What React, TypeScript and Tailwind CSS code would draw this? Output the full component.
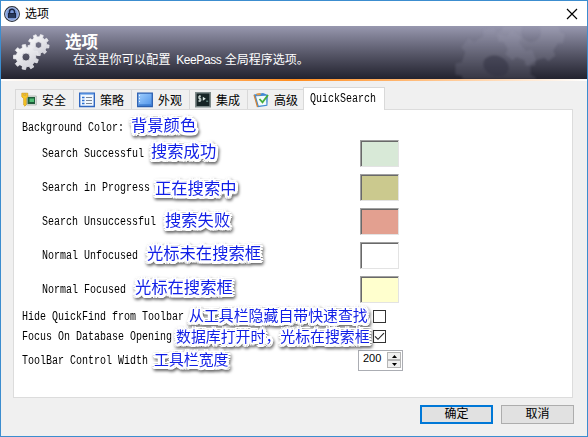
import React from "react";

const cjk = "font-['Liberation_Sans','Noto_Sans_CJK_SC',sans-serif]";

// Outline of a toothed wheel centred on (cx, cy)
function gearPath(cx: number, cy: number, outer: number, inner: number, teeth: number, turn = 0) {
  const step = (Math.PI * 2) / teeth;
  const at = (r: number, a: number) => `${(cx + r * Math.cos(a)).toFixed(2)} ${(cy + r * Math.sin(a)).toFixed(2)}`;
  let d = "";
  for (let i = 0; i < teeth; i++) {
    const a = i * step + turn;
    d += `${i ? "L" : "M"}${at(inner, a - step * 0.28)}L${at(outer, a - step * 0.2)}L${at(outer, a + step * 0.2)}L${at(inner, a + step * 0.28)}`;
  }
  return d + "Z";
}

function hole(cx: number, cy: number, r: number) {
  return `M${cx - r} ${cy}a${r} ${r} 0 1 0 ${r * 2} 0a${r} ${r} 0 1 0 ${-r * 2} 0Z`;
}

function Gears() {
  return (
    <svg width="40" height="38" viewBox="0 0 40 38" className="shrink-0">
      <defs>
        <linearGradient id="metal" x1="0" y1="0" x2="0.6" y2="1">
          <stop offset="0" stopColor="#fff" />
          <stop offset="1" stopColor="#d2d2da" />
        </linearGradient>
      </defs>
      <g fill="url(#metal)" fillRule="evenodd" stroke="#e8e8ee" strokeWidth="0.8" strokeLinejoin="round">
        <path d={gearPath(26.5, 12, 10.6, 8.2, 9, 0.15) + hole(26.5, 12, 3.3)} />
        <path d={gearPath(14, 24, 12.6, 9.8, 9, 0.35) + hole(14, 24, 4)} />
      </g>
    </svg>
  );
}

function FadedGears() {
  return (
    <svg width="116" height="53" viewBox="0 0 116 53" className="shrink-0 blur-[1.2px]">
      <g fill="#b4b4c4" fillRule="evenodd">
        <path opacity="0.16" d={gearPath(78, 6, 34, 29, 9, 0.2) + hole(78, 6, 10)} />
        <path opacity="0.14" d={gearPath(43, 43, 41, 35, 9, 0.35)} />
      </g>
      <ellipse cx="43" cy="40" rx="13" ry="10" fill="#303040" opacity="0.5" transform="rotate(20 43 40)" />
    </svg>
  );
}

function LockIcon() {
  return (
    <svg width="16" height="16" viewBox="0 0 16 16">
      <circle cx="8" cy="8" r="7.4" fill="#7796d6" stroke="#30343c" strokeWidth="1.1" />
      <circle cx="8" cy="8" r="6.3" fill="none" stroke="#b8c8eb" strokeWidth="0.9" />
      <path d="M5.5 8V5.7a2.5 2.5 0 0 1 5 0V8" fill="none" stroke="#182543" strokeWidth="1.5" />
      <path d="M4 7h8v5H4z" fill="#182543" />
      <path d="M5 9h6M5 11h6" stroke="#51668f" strokeWidth="0.6" />
    </svg>
  );
}

function SecurityIcon() {
  return (
    <svg width="16" height="16" viewBox="0 0 16 16">
      <path d="M5.5 4h9.8v9H5.5z" fill="#dfe3df" stroke="#aab0aa" strokeWidth="0.8" />
      <path d="M6.5 5h7.5v7H6.5z" fill="#1f5c3a" />
      <path d="M8.5 6.5h4.5v3.5H8.5z" fill="#4fbd73" />
      <path fillRule="evenodd" d="M.8 1.2h6v3.6L5.2 6.5v6.2l-1.3 1.5-1.2-1.2V6.5L.8 4.8zM2.8 2.2v1.2h2V2.2z" fill="#f8c728" stroke="#c98f05" strokeWidth="0.6" />
    </svg>
  );
}

function PolicyIcon() {
  return (
    <svg width="16" height="16" viewBox="0 0 16 16">
      <path d="M.7 1.2h14.6v13.3H.7z" fill="#f2f8ff" stroke="#2f66c0" strokeWidth="1.4" />
      <path d="M1.3 2h13.4" stroke="#639ee8" strokeWidth="1.3" />
      <path d="M3 5.5h2.5M3 8.5h2.5M3 11.5h2.5" stroke="#2d70d2" strokeWidth="1.5" />
      <path d="M7 5.5h6M7 8.5h6M7 11.5h6" stroke="#7b8697" />
    </svg>
  );
}

function InterfaceIcon() {
  return (
    <svg width="16" height="16" viewBox="0 0 16 16">
      <defs>
        <linearGradient id="screen" x2="1" y2="1">
          <stop offset="0" stopColor="#a4d1ff" />
          <stop offset="1" stopColor="#4a90e8" />
        </linearGradient>
      </defs>
      <path d="M.7 1.2h14.6v13.3H.7z" fill="url(#screen)" stroke="#2b5fb0" strokeWidth="1.3" />
      <path d="M2 13h12" stroke="#2f6fc4" />
      <path d="M2.5 3v9" stroke="#e8f3ff" strokeDasharray="1 2" />
    </svg>
  );
}

function TerminalIcon() {
  return (
    <svg width="16" height="16" viewBox="0 0 16 16">
      <path d="M.8.8h14.4v14H.8z" fill="#172526" stroke="#7f8b8b" strokeWidth="1.6" />
      <path d="M6 4.2H3.8v2.4h2V9H3.2M4.8 3.2V10" fill="none" stroke="#dce8e5" strokeWidth="0.9" />
      <path d="M7.8 4.8l3 2-3 2z" fill="#dce8e5" />
      <path d="M11.2 9.2h2" stroke="#7eaaa2" />
    </svg>
  );
}

function AdvancedIcon() {
  return (
    <svg width="16" height="16" viewBox="0 0 16 16">
      <path d="M.8 2.5L10 1l5 2-.6 10.8-9.7 1.5z" fill="#448bd3" />
      <path d="M1 2.8L4.5 15" stroke="#d78432" strokeWidth="1.2" />
      <path d="M3 4.2l10-.4.4 9-7.7 1z" fill="#f3fbfa" />
      <path d="M3.3 1.5l4-.6.5 2.2-4 .5z" fill="#e49a45" />
      <path d="M6.5 7l3 3.4L15 3" fill="none" stroke="#45ad3c" strokeWidth="1.8" />
    </svg>
  );
}

function Mono({ children }: { children: React.ReactNode }) {
  return (
    <span className="mt-[2px] shrink-0 origin-center scale-y-[1.2] font-['Liberation_Mono',monospace] text-[10px] leading-[14px] whitespace-pre text-black">
      {children}
    </span>
  );
}

// Blue remark with a rounded white halo and a soft shadow under it
function Note({ children, className }: { children: React.ReactNode; className: string }) {
  return (
    <span
      className={`shrink-0 font-['Noto_Sans_CJK_SC',sans-serif] leading-[20px] whitespace-nowrap text-[#101ee6] drop-shadow-[1px_2px_1.5px_rgba(0,0,0,0.6)] [text-shadow:3px_0_white,-3px_0_white,0_3px_white,0_-3px_white,2.6px_1.5px_white,-2.6px_1.5px_white,2.6px_-1.5px_white,-2.6px_-1.5px_white,1.5px_2.6px_white,-1.5px_2.6px_white,1.5px_-2.6px_white,-1.5px_-2.6px_white,1.5px_0_white,-1.5px_0_white,0_1.5px_white,0_-1.5px_white,1px_1px_white,-1px_-1px_white,1px_-1px_white,-1px_1px_white] ${className}`}
    >
      {children}
    </span>
  );
}

const tabs = [
  { label: "安全", icon: <SecurityIcon /> },
  { label: "策略", icon: <PolicyIcon /> },
  { label: "外观", icon: <InterfaceIcon /> },
  { label: "集成", icon: <TerminalIcon /> },
  { label: "高级", icon: <AdvancedIcon /> },
];

const colours = [
  { label: "Search Successful", note: "搜索成功", place: "ml-[7px] -mt-[8px]", fill: "bg-[#d8e9d7]" },
  { label: "Search in Progress", note: "正在搜索中", place: "ml-[5px] -mt-[2px]", fill: "bg-[#cbc98e]" },
  { label: "Search Unsuccessful", note: "搜索失败", place: "ml-[9px] -mt-[5px]", fill: "bg-[#e3a090]" },
  { label: "Normal Unfocused", note: "光标未在搜索框", place: "ml-[9px] -mt-[8px]", fill: "bg-white" },
  { label: "Normal Focused", note: "光标在搜索框", place: "ml-[9px] -mt-[8px]", fill: "bg-[#ffffce]" },
];

function Checkbox({ checked = false }: { checked?: boolean }) {
  return (
    <span className="ml-[13px] flex h-[13px] w-[13px] shrink-0 items-center justify-center border border-[#333] bg-white">
      {checked && (
        <svg width="11" height="11" viewBox="0 0 11 11" fill="none" stroke="#222" strokeWidth="1.1">
          <path d="M1 5.3l3 3L10 2.2" />
        </svg>
      )}
    </span>
  );
}

export default function App() {
  return (
    <div className={`flex h-[437px] w-[588px] flex-col overflow-hidden border border-[#3c8dcf] bg-[#f0f0f0] text-[12px] text-black ${cjk}`}>
      <header className="flex h-[25px] shrink-0 items-center bg-white pr-[9px] pl-[3px]">
        <LockIcon />
        <span className="ml-[5px] flex-1 leading-[16px]">选项</span>
        <svg width="12" height="12" viewBox="0 0 12 12" stroke="#000" strokeWidth="1.15">
          <path d="M1 1l10 10M11 1L1 11" />
        </svg>
      </header>

      <section className="flex h-[53px] shrink-0 overflow-hidden bg-linear-to-b from-[#9898af] to-[#23232f] pl-[11px] text-white">
        <div className="pt-[7px]">
          <Gears />
        </div>
        <div className="flex-1 pt-[6px] pl-[13px]">
          <h1 className="text-[16.5px] leading-[20px] font-bold">选项</h1>
          <p className="flex pl-[8px] leading-[16px] whitespace-pre">
            <span className="tracking-[0.2px]">在这里你可以配置 </span>
            <span className="ml-[2px] tracking-[-0.4px]">KeePass</span>
            <span> 全局程序选项。</span>
          </p>
        </div>
        <div className="pr-[18px]">
          <FadedGears />
        </div>
      </section>
      <div className="h-[2px] shrink-0 bg-linear-to-r/srgb from-white via-[#ff8c1e] to-white" />

      <main className="px-[12px] pt-[6px]">
        <nav className="flex h-[22px] items-end pl-[2px]">
          {tabs.map((tab) => (
            <div key={tab.label} className="flex h-[20px] w-[58px] shrink-0 items-center border-t border-l border-[#d9d9d9] pl-[5px]">
              {tab.icon}
              <span className="ml-[5px] pt-[2px] leading-[16px] whitespace-nowrap">{tab.label}</span>
            </div>
          ))}
          <div className="relative z-10 -mb-px -ml-[2px] flex h-[23px] w-[82px] shrink-0 items-center border border-b-0 border-[#d9d9d9] bg-white pl-[6px]">
            <Mono>QuickSearch</Mono>
          </div>
        </nav>

        <section className="h-[289px] w-[560px] border border-[#dcdcdc] bg-white">
          <div className="flex h-[30px] items-center pt-[5px] pl-[8px]">
            <Mono>Background Color:</Mono>
            <Note className="-mt-[7px] ml-[7px] text-[16.3px]">背景颜色</Note>
          </div>

          {colours.map((row) => (
            <div key={row.label} className="flex h-[34px] items-start">
              <div className="flex h-[27px] w-[346px] shrink-0 items-center pl-[28px]">
                <Mono>{row.label}</Mono>
                <Note className={`text-[16.3px] ${row.place}`}>{row.note}</Note>
              </div>
              <div className="h-[27px] w-[39px] border border-t-[#a0a0a0] border-r-[#e3e3e3] border-b-[#e3e3e3] border-l-[#a0a0a0]">
                <div className={`h-full w-full border-t border-l border-[#696969] ${row.fill}`} />
              </div>
            </div>
          ))}

          <div className="flex h-[20px] items-start">
            <div className="flex h-[13px] w-[346px] shrink-0 items-center pl-[8px]">
              <Mono>Hide QuickFind from Toolbar</Mono>
              <Note className="-mt-[3px] ml-[5px] text-[14.9px]">从工具栏隐藏自带快速查找</Note>
            </div>
            <Checkbox />
          </div>
          <div className="flex h-[20px] items-start">
            <div className="flex h-[13px] w-[346px] shrink-0 items-center pl-[8px]">
              <Mono>Focus On Database Opening</Mono>
              <Note className="-mt-[2px] ml-[4px] text-[14.9px]">数据库打开时，光标在搜索框</Note>
            </div>
            <Checkbox checked />
          </div>
          <div className="flex h-[21px] items-center">
            <div className="flex h-[21px] w-[344px] shrink-0 items-center pl-[8px]">
              <Mono>ToolBar Control Width</Mono>
              <Note className="-mt-[3px] ml-[6px] text-[14.9px]">工具栏宽度</Note>
            </div>
            <div className="flex h-[21px] w-[45px] border border-[#abadb3] bg-white pr-px pl-[4px]">
              <span className="flex-1 text-[11px] leading-[14px]">200</span>
              <div className="flex w-[14px] flex-col pt-px pb-[2px]">
                {["M2 4h5L4.5 1z", "M2 1h5L4.5 4z"].map((d) => (
                  <span key={d} className="flex flex-1 items-center justify-center border border-[#b5b5b5] bg-[#f0f0f0]">
                    <svg width="9" height="5" viewBox="0 0 9 5">
                      <path d={d} />
                    </svg>
                  </span>
                ))}
              </div>
            </div>
          </div>
        </section>

        <footer className="flex justify-end gap-[8px] pt-[7px] pr-px">
          <button className="h-[19px] w-[73px] border-2 border-[#0078d7] bg-[#e1e1e1] leading-[15px]">确定</button>
          <button className="h-[19px] w-[73px] border border-[#adadad] bg-[#e1e1e1] leading-[17px]">取消</button>
        </footer>
      </main>
    </div>
  );
}
